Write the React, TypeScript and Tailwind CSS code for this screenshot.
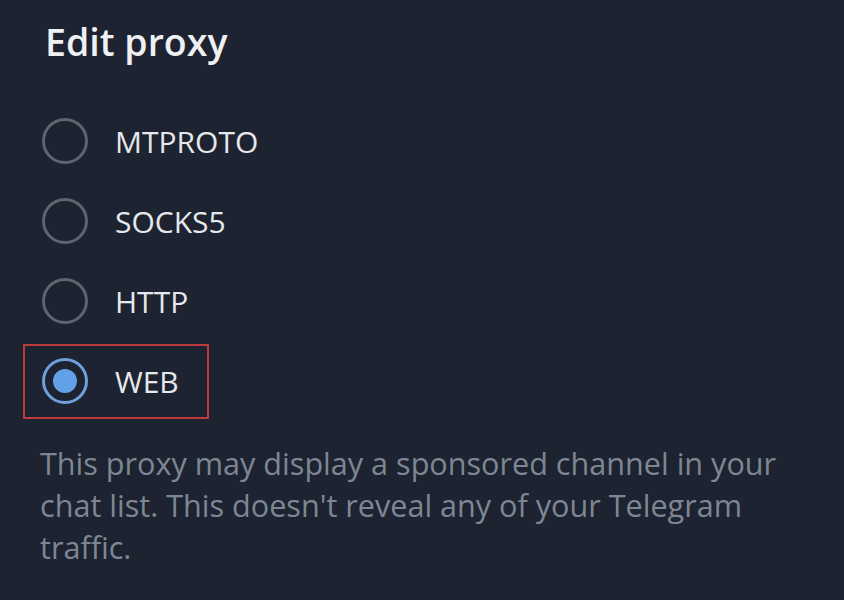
import React, { useState } from 'react';

const OPTIONS = ['MTPROTO', 'SOCKS5', 'HTTP', 'WEB'];

const Radio = ({ checked }: { checked: boolean }) => (
	<div
		className={`w-[46px] h-[46px] rounded-full border-[3px] flex items-center justify-center shrink-0 ${
			checked ? 'border-[#6f9fdc]' : 'border-[#5f656e]'
		}`}
	>
		{checked && <div className="w-[24px] h-[24px] rounded-full bg-[#62a0e8]" />}
	</div>
);

export default function App() {
	const [selected, setSelected] = useState('WEB');

	return (
		<div
			className="w-[844px] h-[600px] bg-[#1d2330] overflow-hidden"
			style={{ fontFamily: '"Open Sans", "Noto Sans", sans-serif' }}
		>
			<h1 className="pt-[16px] pl-[45px] text-[37.5px] leading-[51px] font-semibold text-[#eef0f3]">
				Edit proxy
			</h1>

			<div className="mt-[34px]">
				{OPTIONS.map(opt => (
					<div key={opt} className="h-[80px] pl-[23px] flex items-center">
						<button
							onClick={() => setSelected(opt)}
							className={`h-[75px] w-[186px] pl-[17px] flex items-center gap-[27px] border-2 ${
								opt === 'WEB' ? 'border-[#c0393b]' : 'border-transparent'
							}`}
						>
							<Radio checked={selected === opt} />
							<span className="text-[30px] text-[#e6e8eb]">{opt}</span>
						</button>
					</div>
				))}
			</div>

			<p className="mt-[21px] pl-[40px] pr-[30px] text-[30.6px] leading-[42px] text-[#7d8793]">
				This proxy may display a sponsored channel in your chat list. This doesn't reveal any of your
				Telegram traffic.
			</p>
		</div>
	);
}
